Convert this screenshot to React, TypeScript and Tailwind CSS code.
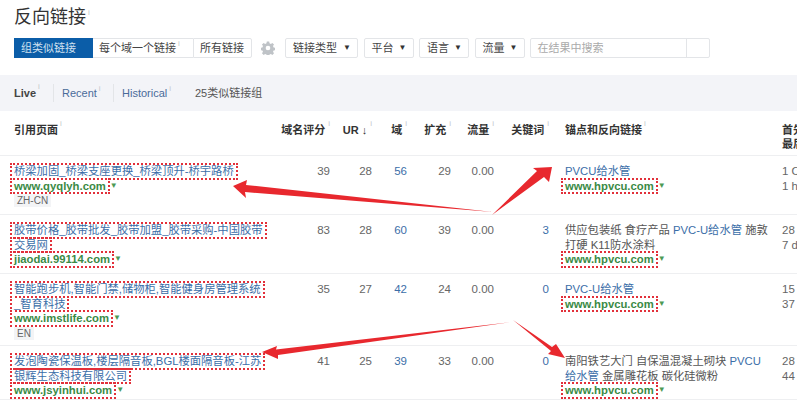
import React from "react";

const FONT = "[font-family:'Liberation_Sans','Noto_Sans_CJK_SC',sans-serif]";
const BOX = "outline-2 outline-dotted outline-[#e2303a] -outline-offset-1";
const LINK = "text-[#3b6ea8]";

function I() {
  return <sup className="ml-[2px] text-[8px] font-normal leading-none text-[#c4c8cc] align-[4px]">i</sup>;
}

function HI() {
  return <sup className="ml-[3px] text-[8px] font-normal leading-none text-[#c4c8cc] align-[4px]">i</sup>;
}

function Boxed({ children, className = "" }: { children: React.ReactNode; className?: string }) {
  return <div className={`w-fit px-[3px] -ml-[3px] ${BOX} ${className}`}>{children}</div>;
}

function Url({ text }: { text: string }) {
  return (
    <div className="flex items-center">
      <Boxed className="font-bold text-[11.300px] text-[#3a8a45]">{text}</Boxed>
      <span className="ml-[1px] text-[8px] leading-none text-[#4c9a55]">▼</span>
    </div>
  );
}

function Select({ label, w }: { label: string; w: string }) {
  return (
    <div className={`${w} h-[20px] flex items-center justify-between pl-[7px] pr-[6px] bg-white border border-[#e3e5e8] rounded-[2px] text-[11px] text-[#444]`}>
      <span>{label}</span>
      <span className="text-[8px] text-[#333]">▼</span>
    </div>
  );
}

type Row = {
  h: string;
  title: string[];
  url: string;
  tag?: string;
  nums: [string, string, string, string, string, string];
  anchor: React.ReactNode[];
  last: [string, string];
};

const rows: Row[] = [
  {
    h: "h-[59px]",
    title: ["桥梁加固_桥梁支座更换_桥梁顶升-桥宇路桥"],
    url: "www.qyqlyh.com",
    tag: "ZH-CN",
    nums: ["39", "28", "56", "29", "0.00", ""],
    anchor: [<span className={LINK}>PVCU给水管</span>],
    last: ["1 O", "1 h"],
  },
  {
    h: "h-[59px]",
    title: ["胶带价格_胶带批发_胶带加盟_胶带采购-中国胶带", "交易网"],
    url: "jiaodai.99114.com",
    nums: ["83", "28", "60", "39", "0.00", "3"],
    anchor: [
      <>供应包装纸 食疗产品 <span className={LINK}>PVC-U给水管</span> 施敦</>,
      <>打硬 K11防水涂料</>,
    ],
    last: ["28", "7 d"],
  },
  {
    h: "h-[72px]",
    title: ["智能跑步机,智能门禁,储物柜,智能健身房管理系统", "_智育科技"],
    url: "www.imstlife.com",
    tag: "EN",
    nums: ["35", "27", "42", "24", "0.00", "0"],
    anchor: [<span className={LINK}>PVC-U给水管</span>],
    last: ["15", "37"],
  },
  {
    h: "h-[54px]",
    title: ["发泡陶瓷保温板,楼层隔音板,BGL楼面隔音板-江苏", "银辉生态科技有限公司"],
    url: "www.jsyinhui.com",
    nums: ["41", "25", "39", "33", "0.00", "0"],
    anchor: [
      <>南阳铁艺大门 自保温混凝土砌块 <span className={LINK}>PVCU</span></>,
      <><span className={LINK}>给水管</span> 金属雕花板 碳化硅微粉</>,
    ],
    last: ["28", "44"],
  },
];

const GRID = "grid grid-cols-[266px_50px_42px_35px_44px_43px_55px_233px_60px] pl-[14px]";

function Arrow({ points }: { points: string }) {
  return <polygon points={points} fill="#e8282e" />;
}

export default function App() {
  return (
    <div className={`relative w-[797px] h-[400px] overflow-hidden bg-white ${FONT} text-[11px] text-[#555]`}>
      <div className="pl-[14px] pt-[5px] h-[38px] text-[18px] leading-[24px] text-[#333]">
        反向链接<I />
      </div>

      <div className="pl-[14px] flex items-center h-[20px]">
        <div className="flex h-[20px] text-[11px] text-[#444]">
          <div className="w-[79px] flex items-center pl-[7px] bg-[#0b5da8] text-[#cfe0f0]">组类似链接</div>
          <div className="w-[100px] flex items-center pl-[6px] border-y border-[#e3e5e8]">每个域一个链接<I /></div>
          <div className="w-[59px] flex items-center pl-[6px] border border-[#e3e5e8] rounded-r-[2px]">所有链接</div>
        </div>
        <svg viewBox="0 0 24 24" className="w-[14px] h-[14px] ml-[9px] mr-[10px]" fill="#bfc3c7">
          <path d="M10 1h4l.6 3 2.3 1 2.6-1.7 2.8 2.8-1.700 2.600 1 2.300 3 .6v4l-3 .6-1 2.300 1.700 2.600-2.800 2.800-2.600-1.700-2.300 1-.6 3h-4l-.6-3-2.300-1-2.600 1.700-2.800-2.800 1.700-2.600-1-2.300-3-.6v-4l3-.6 1-2.300-1.700-2.600 2.800-2.800 2.600 1.700 2.300-1zM12 8a4 4 0 1 0 0 8 4 4 0 0 0 0-8z" fillRule="evenodd" />
        </svg>
        <div className="flex gap-[5.500px]">
          <Select label="链接类型" w="w-[73px]" />
          <Select label="平台" w="w-[50px]" />
          <Select label="语言" w="w-[50px]" />
          <Select label="流量" w="w-[50px]" />
        </div>
        <div className="ml-[5px] flex h-[20px] w-[180px] border border-[#e3e5e8] rounded-[2px] bg-white">
          <div className="w-[156px] flex items-center pl-[7px] border-r border-[#e3e5e8] text-[#aaa]">在结果中搜索</div>
        </div>
      </div>

      <div className="mt-[17px] h-[36px] bg-[#f3f4f8] pl-[14px] flex items-center text-[11px]">
        <span className="w-[39px] font-bold text-[#444]">Live<I /></span>
        <span className="w-[60px] h-[18px] flex items-center pl-[8px] border-l border-[#e3e5e8] text-[#4a6b9a]">Recent<I /></span>
        <span className="w-[82px] h-[18px] flex items-center pl-[8px] border-l border-[#e3e5e8] text-[#4a6b9a]">Historical<I /></span>
        <span className="text-[#555]">25类似链接组</span>
      </div>

      <div className={`${GRID} h-[45px] items-start pt-[12px] font-bold text-[#333] leading-[14px] border-b border-[#eeeff1]`}>
        <div>引用页面<I /></div>
        <div className="text-right">域名评分<HI /></div>
        <div className="text-right">UR ↓<HI /></div>
        <div className="text-right">域<HI /></div>
        <div className="text-right">扩充<HI /></div>
        <div className="text-right">流量<HI /></div>
        <div className="text-right">关键词<HI /></div>
        <div className="pl-[16px]">锚点和反向链接<I /></div>
        <div className="whitespace-nowrap">首先<br />最后</div>
      </div>

      {rows.map((r) => (
        <div key={r.url} className={`${GRID} ${r.h} pt-[8px] leading-[14.500px] text-[11.300px] border-b border-[#eeeff1]`}>
          <div className={LINK}>
            {r.title.map((t) => (
              <Boxed key={t} className="whitespace-nowrap">{t}</Boxed>
            ))}
            <Url text={r.url} />
            {r.tag && (
              <div className="w-fit mt-[1px] px-[3px] bg-[#f3f4f6] text-[10px] leading-[13px] text-[#666]">{r.tag}</div>
            )}
          </div>
          {r.nums.map((n, i) => (
            <div key={i} className={`text-right text-[11.500px] ${i === 2 || i === 5 ? LINK : "text-[#666]"}`}>{n}</div>
          ))}
          <div className="pl-[16px] text-[#555] whitespace-nowrap">
            {r.anchor.map((a, i) => (
              <div key={i}>{a}</div>
            ))}
            <Url text="www.hpvcu.com" />
          </div>
          <div className="text-[#666] text-[11.500px] whitespace-nowrap">
            <div>{r.last[0]}</div>
            <div>{r.last[1]}</div>
          </div>
        </div>
      ))}

      <svg className="absolute left-0 top-0 pointer-events-none" width="797" height="400" viewBox="0 0 797 400">
        <Arrow points="233,186 247,180 246,185 493,212 245,192 246,198" />
        <Arrow points="492,215 537,171 533,168 552,167 549,182 544,177" />
        <Arrow points="262,352 277,346 276,349.500 512,322 278,355 278,359" />
        <Arrow points="513,320 552,347 556,344 565,358 548,354 551,351" />
      </svg>
    </div>
  );
}
